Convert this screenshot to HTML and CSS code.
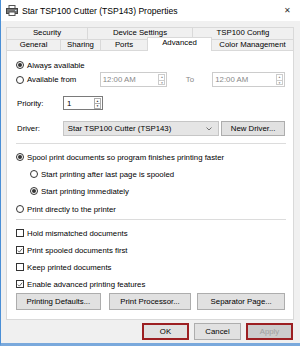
FILE: index.html
```html
<!DOCTYPE html>
<html lang="en">
<head>
    <meta charset="UTF-8">
    <title>Star TSP100 Cutter (TSP143) Properties</title>
    <link rel="stylesheet" href="styles.css">
</head>
<body>
    <div class="window">
        <div class="titlebar">
            <svg class="title-icon" width="12" height="11" viewBox="0 0 12 11">
                <rect x="3" y="0.5" width="6" height="3" fill="#fff" stroke="#555"/>
                <rect x="0.5" y="3.5" width="11" height="5" fill="#777" stroke="#444"/>
                <rect x="3" y="7" width="6" height="3.5" fill="#fff" stroke="#555"/>
                <rect x="9" y="5" width="1.5" height="1" fill="#cde"/>
            </svg>
            <span class="title-text">Star TSP100 Cutter (TSP143) Properties</span>
            <span class="close">&#x2715;</span>
        </div>

        <div class="tabs">
            <div class="tab-row top">
                <div class="tab" style="width:81px">Security</div>
                <div class="tab" style="width:105px">Device Settings</div>
                <div class="tab" style="width:102px">TSP100 Config</div>
            </div>
            <div class="tab-row bottom">
                <div class="tab" style="width:54px">General</div>
                <div class="tab" style="width:40px">Sharing</div>
                <div class="tab" style="width:47px">Ports</div>
                <div class="tab active" style="width:65px">Advanced</div>
                <div class="tab" style="width:82px">Color Management</div>
            </div>
        </div>

        <div class="panel">
            <div class="row r-always">
                <span class="radio checked"></span>Always available
            </div>
            <div class="row r-from">
                <span class="radio"></span><span class="from-label">Available from</span>
                <div class="time-box"><span>12:00 AM</span><span class="spin small"><i>&#9650;</i><i>&#9660;</i></span></div>
                <span class="to-label">To</span>
                <div class="time-box"><span>12:00 AM</span><span class="spin small"><i>&#9650;</i><i>&#9660;</i></span></div>
            </div>
            <div class="row r-priority">
                <span class="label">Priority:</span>
                <div class="num-box"><span>1</span><span class="spin"><i>&#9650;</i><i>&#9660;</i></span></div>
            </div>
            <div class="row r-driver">
                <span class="label">Driver:</span>
                <div class="select">
                    <span>Star TSP100 Cutter (TSP143)</span>
                    <svg width="6" height="4" viewBox="0 0 6 4"><path d="M0.5 0.5 L3 3 L5.5 0.5" fill="none" stroke="#555" stroke-width="0.8"/></svg>
                </div>
                <div class="btn new-driver">New Driver...</div>
            </div>
            <div class="sep first"></div>
            <div class="row r-spool">
                <span class="radio checked"></span>Spool print documents so program finishes printing faster
            </div>
            <div class="row sub r-after">
                <span class="radio"></span>Start printing after last page is spooled
            </div>
            <div class="row sub r-immediate">
                <span class="radio checked"></span>Start printing immediately
            </div>
            <div class="row r-direct">
                <span class="radio"></span>Print directly to the printer
            </div>
            <div class="sep second"></div>
            <div class="row check-row r-hold">
                <span class="check"></span>Hold mismatched documents
            </div>
            <div class="row check-row">
                <span class="check checked"><svg width="7" height="7" viewBox="0 0 7 7"><path d="M1 3.6 L2.8 5.4 L6 1.4" fill="none" stroke="#333" stroke-width="0.9"/></svg></span>Print spooled documents first
            </div>
            <div class="row check-row">
                <span class="check"></span>Keep printed documents
            </div>
            <div class="row check-row">
                <span class="check checked"><svg width="7" height="7" viewBox="0 0 7 7"><path d="M1 3.6 L2.8 5.4 L6 1.4" fill="none" stroke="#333" stroke-width="0.9"/></svg></span>Enable advanced printing features
            </div>
            <div class="panel-buttons">
                <div class="btn defaults">Printing Defaults...</div>
                <div class="btn processor">Print Processor...</div>
                <div class="btn separator">Separator Page...</div>
            </div>
        </div>

        <div class="footer">
            <div class="btn footer-btn marked">OK</div>
            <div class="btn footer-btn">Cancel</div>
            <div class="btn footer-btn marked disabled">Apply</div>
        </div>
    </div>
</body>
</html>
```

FILE: styles.css
```css
body {
    margin: 0;
    font-family: "Liberation Sans", Arial, sans-serif;
    font-size: 7.8px;
    color: #000;
    background-color: #f0f0f0;
}
.window {
    width: 299px;
    height: 343px;
    border-left: 1px solid #4a8fd6;
    border-bottom: 3px solid #7aa9dc;
    background-color: #f0f0f0;
    overflow: hidden;
}
.titlebar {
    display: flex;
    align-items: center;
    height: 21px;
    background-color: #fff;
    padding-left: 5px;
    font-size: 8.6px;
}
.title-icon {
    margin-right: 4px;
}
.title-text {
    flex: 1;
}
.close {
    width: 16px;
    font-size: 8px;
    color: #333;
}
.tabs {
    margin: 6px 0 0 5px;
}
.tab-row {
    display: flex;
}
.tab {
    box-sizing: border-box;
    text-align: center;
    border: 1px solid #d9d9d9;
    border-right: none;
    background-color: #f0f0f0;
    white-space: nowrap;
}
.tab:last-child {
    border-right: 1px solid #d9d9d9;
}
.tab-row.top .tab {
    height: 12px;
    line-height: 10px;
    border-bottom: none;
}
.tab-row.bottom .tab {
    height: 11px;
    line-height: 10px;
    border-bottom: none;
}
.tab.active {
    position: relative;
    background-color: #fff;
    height: 14px !important;
    margin-top: -2px;
    margin-bottom: -1px;
    z-index: 1;
    border-right: 1px solid #d9d9d9;
}
.tab.active + .tab {
    border-left: none;
}
.panel {
    box-sizing: border-box;
    width: 288px;
    height: 270px;
    margin-left: 5px;
    background-color: #fff;
    border: 1px solid #d9d9d9;
    padding: 7px 8px 0 9px;
}
.row {
    display: flex;
    align-items: center;
    height: 14px;
    white-space: nowrap;
}
.radio {
    box-sizing: border-box;
    width: 8px;
    height: 8px;
    border: 1px solid #333;
    border-radius: 50%;
    margin-right: 3px;
    flex: none;
    position: relative;
}
.radio.checked::after {
    content: "";
    position: absolute;
    left: 1px;
    top: 1px;
    width: 4px;
    height: 4px;
    border-radius: 50%;
    background-color: #333;
}
.r-from {
    height: 15px;
}
.from-label {
    width: 73px;
}
.time-box, .num-box {
    box-sizing: border-box;
    display: flex;
    align-items: center;
    justify-content: space-between;
    height: 15px;
    border: 1px solid #ccc;
    background-color: #fff;
    color: #888;
    padding-left: 2px;
}
.time-box {
    width: 68px;
}
.to-label {
    width: 45px;
    text-align: center;
    color: #888;
}
.time-box + .to-label + .time-box {
    width: 73px;
}
.spin {
    display: flex;
    flex-direction: column;
    width: 7px;
    height: 11px;
    margin-right: 1px;
    border: 1px solid #ccc;
    box-sizing: border-box;
}
.spin i {
    flex: 1;
    font-style: normal;
    font-size: 3px;
    line-height: 4.5px;
    text-align: center;
    color: #888;
}
.spin i + i {
    border-top: 1px solid #ccc;
}
.r-priority {
    margin-top: 9px;
}
.label {
    width: 46px;
    padding-left: 1px;
}
.num-box {
    width: 40px;
    height: 14px;
    border-color: #7a7a7a;
    color: #000;
    padding-left: 3px;
}
.num-box .spin {
    border-color: #adadad;
}
.num-box .spin i {
    color: #333;
}
.num-box .spin i + i {
    border-top-color: #adadad;
}
.r-driver {
    height: 15px;
    margin-top: 11px;
}
.select {
    box-sizing: border-box;
    display: flex;
    align-items: center;
    justify-content: space-between;
    width: 157px;
    height: 15px;
    padding: 0 6px 0 4px;
    background-color: #e5e5e5;
    border: 1px solid #c6c6c6;
    margin-right: 2px;
}
.btn {
    box-sizing: border-box;
    display: flex;
    align-items: center;
    justify-content: center;
    height: 16px;
    background-color: #e1e1e1;
    border: 1px solid #adadad;
    white-space: nowrap;
}
.new-driver {
    width: 64px;
    height: 15px;
}
.sep {
    height: 1px;
    background-color: #dcdcdc;
    width: 270px;
}
.sep.first {
    margin-top: 7px;
}
.sep.second {
    margin-top: 3px;
}
.r-spool {
    margin-top: 6px;
}
.sub {
    padding-left: 14px;
    margin-top: 3px;
}
.r-direct {
    margin-top: 4px;
}
.check-row {
    margin-top: 3px;
}
.check-row.r-hold {
    margin-top: 6px;
}
.check {
    box-sizing: border-box;
    display: flex;
    align-items: center;
    justify-content: center;
    width: 8px;
    height: 8px;
    border: 1px solid #333;
    margin-right: 3px;
    flex: none;
}
.panel-buttons {
    display: flex;
    margin-top: 2px;
}
.defaults {
    width: 85px;
    height: 17px;
}
.processor {
    width: 83px;
    height: 17px;
    margin-left: 8px;
}
.separator {
    width: 88px;
    height: 17px;
    margin-left: 6px;
}
.footer {
    display: flex;
    justify-content: flex-end;
    padding: 3px 7px 0 0;
}
.footer-btn {
    width: 47px;
    height: 17px;
    margin-left: 5px;
}
.footer-btn.marked {
    border: 2px solid #9c1f22;
}
.footer-btn.disabled {
    color: #a0a0a0;
    background-color: #cccccc;
}
```
